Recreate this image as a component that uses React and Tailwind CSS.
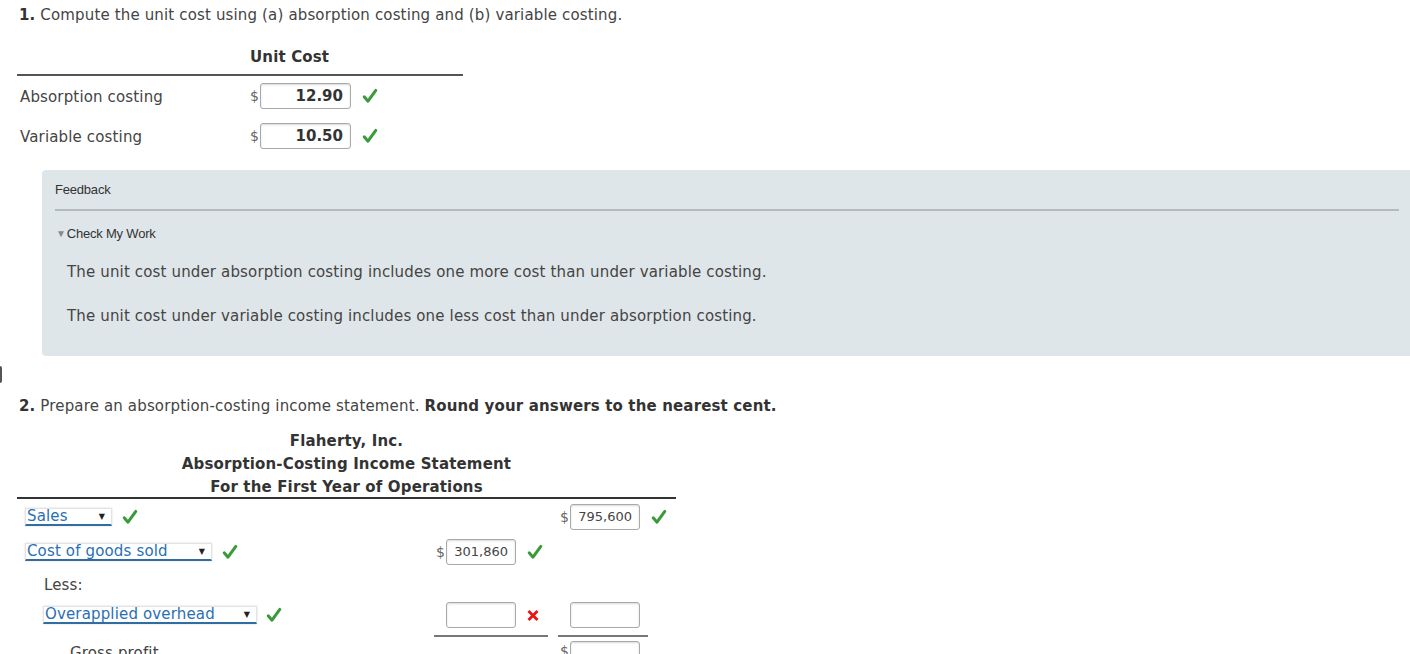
import React from "react";

const Check = ({ className = "" }) => (
  <svg viewBox="0 0 16 16" className={`w-[16px] h-[16px] ${className}`}>
    <path d="M2.2 8.8 L6 13.2 L13.8 2.4" fill="none" stroke="#3a9a3a" strokeWidth="3" strokeLinecap="round" strokeLinejoin="round" />
  </svg>
);

const Cross = () => (
  <svg viewBox="0 0 12 12" className="w-[12px] h-[13px]">
    <path d="M1.5 1.5 L10.5 10.5 M10.5 1.5 L1.5 10.5" fill="none" stroke="#ee1111" strokeWidth="2.8" />
  </svg>
);

const Box = ({ value, w = "w-[70px]", bold = false }) => (
  <div
    className={`${w} h-[26px] bg-white border border-[#a9a9a9] rounded-[3px] shadow-[inset_0_1px_2px_rgba(0,0,0,0.15)] flex items-center justify-end pr-[7px] tracking-normal ${bold ? "text-[15px] font-bold text-[#333]" : "text-[13px] text-[#444]"}`}
  >
    {value}
  </div>
);

const Dropdown = ({ label, w }) => (
  <div className={`${w} h-[18px] bg-white border border-[#e3e3e3] border-b-2 border-b-[#2f6da3] shadow-[0_0_2px_rgba(0,0,0,0.15)] flex items-center justify-between pl-[1px] pr-[6px] text-[15px] text-[#2a6fb5] leading-none`}>
    <span>{label}</span>
    <span className="text-[8px] text-[#222]">▼</span>
  </div>
);

const Dollar = () => <span className="text-[14px] text-[#666] w-[10px] tracking-normal">$</span>;

export default function App() {
  return (
    <div className="relative bg-white w-[1410px] h-[654px] overflow-hidden text-[#444] tracking-[0.15px] font-['DejaVu_Sans',Verdana,sans-serif]">
      <div className="absolute left-0 top-[366px] w-[2px] h-[17px] bg-[#555] rounded-r" />

      <div className="pl-[19px] pt-[5px] text-[15px] leading-[20px]">
        <b className="text-[#333]">1.</b> Compute the unit cost using (a) absorption costing and (b) variable costing.
      </div>

      <div className="ml-[17px] w-[446px] mt-[21px]">
        <div className="h-[30px] pt-[1px] border-b-2 border-[#555] pl-[233px] text-[15px] font-bold text-[#333] leading-[20px]">Unit Cost</div>
        {[
          ["Absorption costing", "12.90"],
          ["Variable costing", "10.50"],
        ].map(([label, v]) => (
          <div key={label} className="h-[40px] flex items-center text-[15px]">
            <div className="w-[233px] pl-[3px] pt-[2px]">{label}</div>
            <Dollar />
            <Box value={v} w="w-[91px]" bold />
            <Check className="ml-[11px]" />
          </div>
        ))}
      </div>

      <div className="ml-[42px] mt-[14px] w-[1380px] h-[186px] bg-[#dfe6e9] rounded-[4px] pl-[13px] pr-[23px]">
        <div className="pt-[10px] h-[41px] border-b-2 border-[#b4babd] text-[13px] text-[#333] tracking-[-0.2px] font-['Liberation_Sans',Arial,sans-serif]">Feedback</div>
        <div className="pt-[13px] text-[13px] text-[#333] tracking-[-0.2px] flex items-center font-['Liberation_Sans',Arial,sans-serif]">
          <span className="text-[10px] text-[#888] mr-[1px] ml-[1px]">▼</span>Check My Work
        </div>
        <p className="pl-[12px] mt-[18px] text-[15px] leading-[20px] text-[#444]">The unit cost under absorption costing includes one more cost than under variable costing.</p>
        <p className="pl-[12px] mt-[24px] text-[15px] leading-[20px] text-[#444]">The unit cost under variable costing includes one less cost than under absorption costing.</p>
      </div>

      <div className="pl-[19px] mt-[40px] text-[15px] leading-[20px]">
        <b className="text-[#333]">2.</b> Prepare an absorption-costing income statement. <b className="text-[#333]">Round your answers to the nearest cent.</b>
      </div>

      <div className="ml-[17px] w-[659px] mt-[14px]">
        <div className="h-[69px] text-center text-[15px] font-bold text-[#333] leading-[23px] border-b-2 border-[#333]">
          <div>Flaherty, Inc.</div>
          <div>Absorption-Costing Income Statement</div>
          <div className="-mb-[2px]">For the First Year of Operations</div>
        </div>

        <div className="h-[36px] flex items-center">
          <div className="w-[417px] pl-[8px] flex items-center">
            <Dropdown label="Sales" w="w-[87px]" />
            <Check className="ml-[10px]" />
          </div>
          <div className="w-[124px]" />
          <div className="w-[90px] flex items-center pl-[2px]">
            <Dollar />
            <Box value="795,600" />
          </div>
          <Check className="ml-[3px]" />
        </div>

        <div className="h-[34px] flex items-center">
          <div className="w-[417px] pl-[8px] flex items-center">
            <Dropdown label="Cost of goods sold" w="w-[187px]" />
            <Check className="ml-[10px]" />
          </div>
          <div className="w-[114px] flex items-center pl-[2px]">
            <Dollar />
            <Box value="301,860" />
            <Check className="ml-[11px]" />
          </div>
        </div>

        <div className="h-[32px] flex items-center pl-[27px] text-[15px]">Less:</div>

        <div className="h-[36px] flex">
          <div className="w-[417px] pl-[26px] flex items-start pt-[5px]">
            <Dropdown label="Overapplied overhead" w="w-[214px]" />
            <Check className="ml-[9px] mt-[1px]" />
          </div>
          <div className="w-[114px] flex items-start pt-[1px] pl-[12px] border-b-2 border-[#777]">
            <Box value="" />
            <span className="ml-[11px] mt-[7px]"><Cross /></span>
          </div>
          <div className="w-[10px]" />
          <div className="w-[90px] flex items-start pt-[1px] pl-[12px] border-b-2 border-[#777]">
            <Box value="" />
          </div>
        </div>

        <div className="h-[30px] flex items-start">
          <div className="w-[541px] pl-[53px] pt-[6px] text-[15px] leading-[20px]">Gross profit</div>
          <div className="w-[90px] flex items-start pl-[2px] pt-[4px]">
            <Dollar />
            <Box value="" />
          </div>
        </div>
      </div>
    </div>
  );
}
